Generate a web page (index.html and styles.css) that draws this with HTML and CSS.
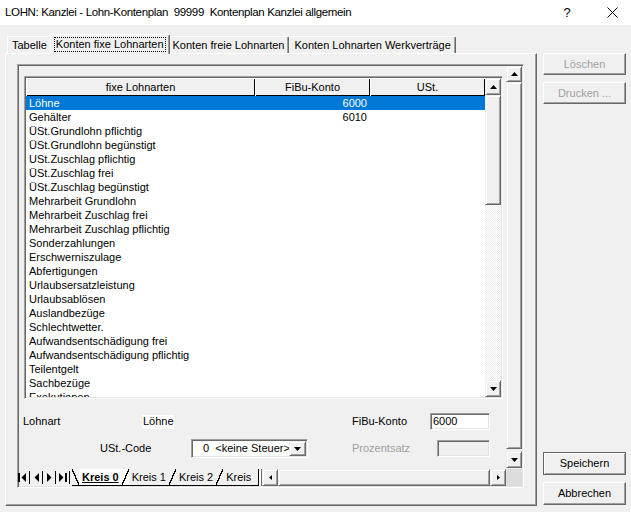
FILE: index.html
```html
<!DOCTYPE html>
<html lang="de">
<head>
<meta charset="utf-8">
<title>LOHN</title>
<link rel="stylesheet" href="styles.css">
</head>
<body>
<div class="window">
  <div class="titlebar">
    <span class="title">LOHN: Kanzlei - Lohn-Kontenplan  99999  Kontenplan Kanzlei allgemein</span>
    <span class="tb-help">?</span>
    <span class="tb-close"><svg width="11" height="11" viewBox="0 0 11 11"><path d="M0.5 0.5L10.5 10.5M10.5 0.5L0.5 10.5" stroke="#000" stroke-width="1" fill="none"/></svg></span>
  </div>
  <div class="client">
    <div class="tabctl">
      <div class="tabstrip">
        <div class="tab">Tabelle</div>
        <div class="tab active"><span class="focus">Konten fixe Lohnarten</span></div>
        <div class="tab">Konten freie Lohnarten</div>
        <div class="tab">Konten Lohnarten Werkverträge</div>
      </div>
      <div class="panel">
        <div class="sheet sunken">
          <div class="sheet-main">
            <div class="form">
              <div class="listbox sunken">
                <div class="list-cols">
                  <div class="list-head">
                    <div class="hc c1">fixe Lohnarten</div>
                    <div class="hc c2">FiBu-Konto</div>
                    <div class="hc c3">USt.</div>
                  </div>
                  <div class="list-rows">
                    <div class="row sel"><span class="c1">Löhne</span><span class="c2">6000</span><span class="c3"></span></div>
                    <div class="row"><span class="c1">Gehälter</span><span class="c2">6010</span><span class="c3"></span></div>
                    <div class="row"><span class="c1">ÜSt.Grundlohn pflichtig</span></div>
                    <div class="row"><span class="c1">ÜSt.Grundlohn begünstigt</span></div>
                    <div class="row"><span class="c1">USt.Zuschlag pflichtig</span></div>
                    <div class="row"><span class="c1">ÜSt.Zuschlag frei</span></div>
                    <div class="row"><span class="c1">ÜSt.Zuschlag begünstigt</span></div>
                    <div class="row"><span class="c1">Mehrarbeit Grundlohn</span></div>
                    <div class="row"><span class="c1">Mehrarbeit Zuschlag frei</span></div>
                    <div class="row"><span class="c1">Mehrarbeit Zuschlag pflichtig</span></div>
                    <div class="row"><span class="c1">Sonderzahlungen</span></div>
                    <div class="row"><span class="c1">Erschwerniszulage</span></div>
                    <div class="row"><span class="c1">Abfertigungen</span></div>
                    <div class="row"><span class="c1">Urlaubsersatzleistung</span></div>
                    <div class="row"><span class="c1">Urlaubsablösen</span></div>
                    <div class="row"><span class="c1">Auslandbezüge</span></div>
                    <div class="row"><span class="c1">Schlechtwetter.</span></div>
                    <div class="row"><span class="c1">Aufwandsentschädigung frei</span></div>
                    <div class="row"><span class="c1">Aufwandsentschädigung pflichtig</span></div>
                    <div class="row"><span class="c1">Teilentgelt</span></div>
                    <div class="row"><span class="c1">Sachbezüge</span></div>
                    <div class="row"><span class="c1">Exekutionen</span></div>
                  </div>
                </div>
                <div class="vscroll list-sb">
                  <div class="sb-btn up"><svg width="7" height="4" viewBox="0 0 7 4"><polygon points="0,4 7,4 3.5,0" fill="#000"/></svg></div>
                  <div class="sb-thumb list-thumb"></div>
                  <div class="sb-track"></div>
                  <div class="sb-btn down"><svg width="7" height="4" viewBox="0 0 7 4"><polygon points="0,0 7,0 3.5,4" fill="#000"/></svg></div>
                </div>
              </div>
              <div class="fields">
                <div class="frow r1">
                  <span class="lbl lbl-lohnart">Lohnart</span>
                  <span class="val">Löhne</span>
                  <span class="lbl lbl-fibu">FiBu-Konto</span>
                  <span class="input sunken">6000</span>
                </div>
                <div class="frow r2">
                  <span class="lbl lbl-ust">USt.-Code</span>
                  <span class="combo sunken"><span class="combo-text">0  &lt;keine Steuer&gt;</span><span class="combo-btn raised"><svg width="7" height="4" viewBox="0 0 7 4"><polygon points="0,0 7,0 3.5,4" fill="#000"/></svg></span></span>
                  <span class="lbl lbl-proz">Prozentsatz</span>
                  <span class="input dis sunken"></span>
                </div>
              </div>
            </div>
            <div class="vscroll outer-sb">
              <div class="sb-btn up o"><svg width="7" height="4" viewBox="0 0 7 4"><polygon points="0,4 7,4 3.5,0" fill="#000"/></svg></div>
              <div class="sb-thumb outer-thumb"></div>
              <div class="sb-gap"></div>
              <div class="sb-btn down"><svg width="7" height="4" viewBox="0 0 7 4"><polygon points="0,0 7,0 3.5,4" fill="#000"/></svg></div>
            </div>
          </div>
          <div class="sheet-bottom">
            <div class="nav">
              <svg width="55" height="15" viewBox="0 0 55 15">
                <rect x="1" y="3" width="2" height="9" fill="#000"/>
                <polygon points="9,3 9,12 4.5,7.5" fill="#000"/>
                <rect x="12" y="1" width="1" height="13" fill="#000"/>
                <polygon points="22,3 22,12 17.5,7.5" fill="#000"/>
                <rect x="25" y="1" width="1" height="13" fill="#000"/>
                <polygon points="30,3 30,12 34.5,7.5" fill="#000"/>
                <rect x="38" y="1" width="1" height="13" fill="#000"/>
                <polygon points="42,3 42,12 46.5,7.5" fill="#000"/>
                <rect x="48" y="3" width="2" height="9" fill="#000"/>
                <rect x="52" y="1" width="1" height="13" fill="#000"/>
              </svg>
            </div>
            <div class="stabs">
              <div class="st active"><span class="st-lbl">Kreis 0</span></div>
              <div class="st"><span class="st-lbl">Kreis 1</span></div>
              <div class="st"><span class="st-lbl">Kreis 2</span></div>
              <div class="st last"><span class="st-lbl">Kreis</span></div>
            </div>
            <div class="splitter"></div>
            <div class="hscroll">
              <div class="hs-btn raised"><svg width="3" height="5" viewBox="0 0 3 5"><polygon points="3,0 3,5 0,2.5" fill="#000"/></svg></div>
              <div class="hs-thumb raised"></div>
              <div class="hs-btn raised"><svg width="3" height="5" viewBox="0 0 3 5"><polygon points="0,0 0,5 3,2.5" fill="#000"/></svg></div>
            </div>
            <div class="corner"></div>
          </div>
        </div>
      </div>
    </div>
    <div class="buttons">
      <div class="btn disabled">Löschen</div>
      <div class="btn disabled second">Drucken ...</div>
      <div class="btn default">Speichern</div>
      <div class="btn cancel">Abbrechen</div>
    </div>
  </div>
</div>
</body>
</html>
```
FILE: styles.css
```css
* { box-sizing: border-box; margin: 0; padding: 0; }
html, body { width: 631px; height: 512px; overflow: hidden; }
body {
  background: #f0f0f0;
  font-family: "Liberation Sans", Arial, sans-serif;
  font-size: 11px;
  line-height: 1;
  color: #000;
}
.window { width: 631px; height: 512px; display: flex; flex-direction: column; }

/* title bar */
.titlebar {
  height: 25px; flex: none; background: #fff;
  display: flex; align-items: center; font-size: 11.5px;
}
.title { flex: 1; padding-left: 5px; white-space: pre; letter-spacing: -0.35px; }
.tb-help { width: 20px; text-align: center; margin-right: 30px; font-size: 13px; letter-spacing: 0; }
.tb-close { width: 11px; height: 11px; margin-right: 13px; display: flex; }

/* client */
.client { flex: 1; display: flex; padding: 9px 5px 8px 5px; }
.tabctl { width: 532px; flex: none; display: flex; flex-direction: column; }
.tabstrip { height: 19px; flex: none; display: flex; align-items: flex-end; padding-left: 2px; }
.tab {
  height: 17px; padding: 0 4px; display: flex; align-items: center; white-space: nowrap;
  border-top: 1px solid #fff; border-left: 1px solid #fff; border-right: 1px solid #696969;
  box-shadow: inset -1px 0 #a0a0a0; border-radius: 2px 2px 0 0; background: #f0f0f0;
}
.tab.active {
  height: 20px; margin: 0 -2px -1px -2px; padding: 0 4px 1px 4px;
  position: relative; z-index: 1;
}
.focus { outline: 1px dotted #000; outline-offset: 0; padding: 1px 1px 1px 1px; }

.panel {
  height: 453px; flex: none;
  border: 1px solid; border-color: #fff #696969 #696969 #fff;
  box-shadow: inset -1px -1px #a0a0a0;
  padding: 10px 0 0 11px;
}

.sunken {
  border: 1px solid; border-color: #a0a0a0 #fff #fff #a0a0a0;
  box-shadow: inset 1px 1px #696969, inset -1px -1px #e3e3e3;
  padding: 1px;
}
.raised {
  border: 1px solid; border-color: #f0f0f0 #696969 #696969 #f0f0f0;
  box-shadow: inset 1px 1px #fff, inset -1px -1px #a0a0a0;
  background: #f0f0f0;
}

.sheet { width: 507px; height: 424px; display: flex; flex-direction: column; }
.sheet-main { height: 403px; flex: none; display: flex; }
.form { flex: 1; padding: 10px 0 0 5px; }

/* list box */
.listbox { width: 479px; height: 323px; display: flex; background: #fff; }
.list-cols { width: 459px; flex: none; display: flex; flex-direction: column; overflow: hidden; }
.list-head { height: 18px; flex: none; display: flex; background: #f0f0f0; }
.hc {
  height: 18px; display: flex; align-items: center; justify-content: center;
  box-shadow: inset 1px 1px #fff, inset -1px -1px #000;
}
.c1 { width: 229px; flex: none; }
.c2 { width: 115px; flex: none; }
.c3 { width: 115px; flex: none; }
.list-rows { flex: 1; overflow: hidden; }
.row { height: 14px; display: flex; align-items: center; white-space: nowrap; }
.row .c1 { padding-left: 3px; }
.row .c2 { text-align: right; padding-right: 3px; }
.row.sel { background: #0078d7; color: #fff; }

/* scrollbars */
.vscroll { width: 16px; flex: none; display: flex; flex-direction: column; }
.sb-btn, .sb-thumb {
  border: 1px solid; border-color: #f0f0f0 #696969 #696969 #f0f0f0;
  box-shadow: inset 1px 1px #fff, inset -1px -1px #a0a0a0;
  background: #f0f0f0; flex: none;
}
.sb-btn { height: 17px; display: flex; align-items: center; justify-content: center; }
.sb-btn.o { height: 16px; }
.list-thumb { height: 110px; }
.sb-track {
  flex: 1;
  background: repeating-conic-gradient(#fff 0 25%, #ececec 0 50%) 0 0 / 2px 2px;
}
.outer-sb { background: #f0f0f0; padding-bottom: 1px; }
.outer-thumb { flex: 1; }
.sb-gap { height: 2px; flex: none; }

/* fields */
.fields { margin-left: -5px; }
.frow { display: flex; align-items: center; white-space: nowrap; }
.r1 { height: 17px; margin-top: 14px; }
.r2 { height: 19px; margin-top: 9px; }
.lbl { flex: none; }
.lbl-lohnart { margin-left: 4px; width: 119px; }
.val { flex: none; width: 32px; height: 14px; background: #fff; padding-left: 1px; display: flex; align-items: center; }
.lbl-fibu { margin-left: 178px; width: 78px; }
.input { flex: none; width: 60px; height: 17px; background: #fff; padding: 1px 2px; display: flex; align-items: center; }
.input.dis { width: 53px; background: #f0f0f0; }
.lbl-ust { margin-left: 81px; width: 91px; }
.combo { flex: none; width: 117px; height: 19px; background: #fff; display: flex; }
.combo-text { flex: 1; padding-left: 10px; white-space: pre; overflow: hidden; display: flex; align-items: center; }
.combo-btn { width: 17px; flex: none; display: flex; align-items: center; justify-content: center; }
.lbl-proz { margin-left: 44px; width: 85px; color: #a0a0a0; }

/* sheet bottom */
.sheet-bottom { height: 17px; flex: none; display: flex; margin-left: -2px; }
.nav { width: 55px; flex: none; display: flex; align-items: center; }
.stabs {
  width: 186px; flex: none; display: flex; overflow: hidden;
  border-bottom: 1px solid #000; white-space: nowrap;
}
.st { display: flex; align-items: center; flex: none; }
.st-lbl { padding: 1px 3px 0 3px; }
.st::after {
  content: ""; width: 7px; align-self: stretch; flex: none;
  background: linear-gradient(to top left, transparent calc(50% - 0.7px), #000 calc(50% - 0.7px), #000 calc(50% + 0.7px), transparent calc(50% + 0.7px));
}
.st.last::after { display: none; }
.st.active { background: #fff; }
.st.active::before {
  content: ""; width: 7px; align-self: stretch; flex: none; background-color: #f0f0f0;
  background-image: linear-gradient(to top right, transparent calc(50% - 0.7px), #000 calc(50% - 0.7px), #000 calc(50% + 0.7px), transparent calc(50% + 0.7px));
}
.st.active .st-lbl { font-weight: bold; text-decoration: underline; }
.splitter { width: 4px; flex: none; border-left: 1px solid #000; border-right: 1px solid #696969; background: #fff; }
.hscroll { width: 244px; flex: none; display: flex; }
.hs-btn { width: 16px; flex: none; display: flex; align-items: center; justify-content: center; }
.hs-thumb { flex: 1; }
.corner { width: 16px; flex: none; background: #dcdcdc; }

/* right buttons */
.buttons { width: 83px; flex: none; margin-left: 6px; display: flex; flex-direction: column; padding-top: 19px; }
.btn {
  height: 22px; flex: none; display: flex; align-items: center; justify-content: center;
  border: 1px solid; border-color: #fff #696969 #696969 #fff;
  box-shadow: inset -1px -1px #a0a0a0; background: #f0f0f0;
}
.btn.second { margin-top: 7px; }
.btn.disabled { color: #a0a0a0; }
.btn.default {
  margin-top: auto; height: 23px;
  border-color: #646464;
  box-shadow: inset 1px 1px #fff, inset -1px -1px #a0a0a0;
}
.btn.cancel { margin-top: 7px; height: 23px; margin-bottom: 1px; }
```
